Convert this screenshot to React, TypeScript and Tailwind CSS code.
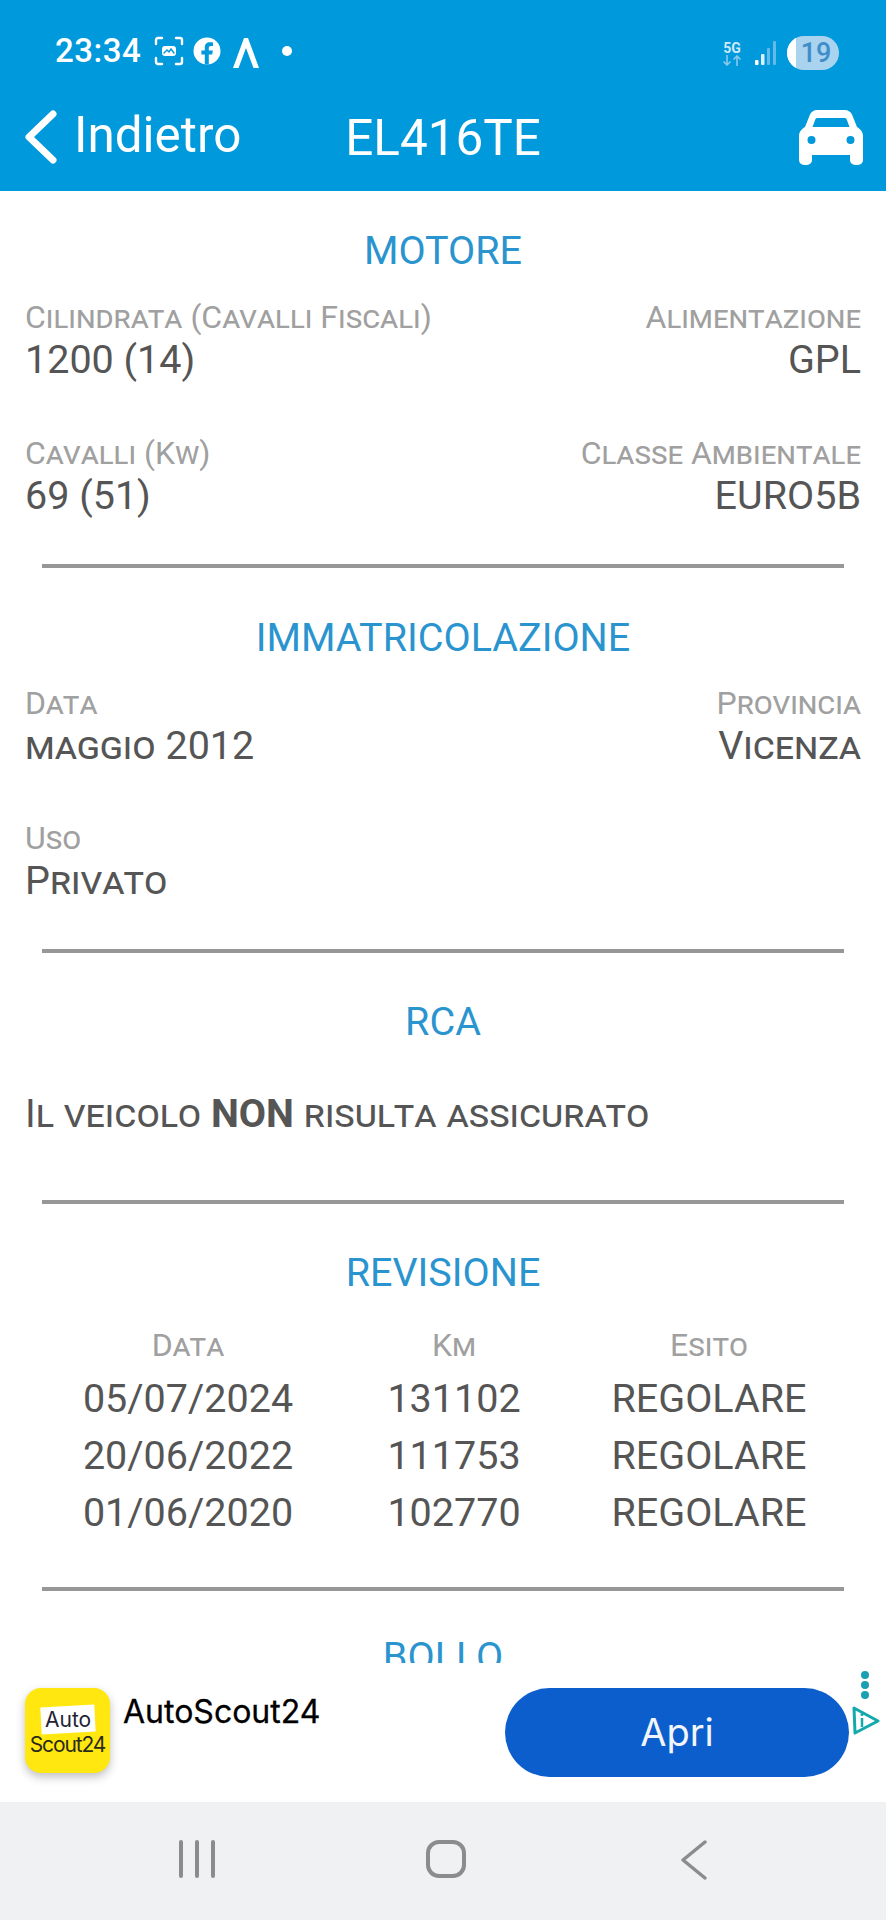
import { ReactNode } from "react";

const Label = ({ children }: { children: ReactNode }) => (
  <div className="text-[32px] leading-[38px] text-[#a0a0a0] [font-variant-caps:small-caps]">{children}</div>
);

const Value = ({ children, caps }: { children: ReactNode; caps?: boolean }) => (
  <div className={`text-[39.500px] leading-[48px] text-[#555555] ${caps ? "[font-variant-caps:small-caps]" : ""}`}>{children}</div>
);

const Field = ({ label, value, caps, right }: { label: string; value: string; caps?: boolean; right?: boolean }) => (
  <div className={right ? "text-right" : ""}>
    <Label>{label}</Label>
    <Value caps={caps}>{value}</Value>
  </div>
);

const Title = ({ children }: { children: ReactNode }) => (
  <h2 className="text-center text-[39.500px] leading-[46px] text-[#2a94cf]">{children}</h2>
);

const Divider = () => <div className="mx-[42px] h-[4px] bg-[#979797]" />;

const StatusBar = () => (
  <div className="flex h-[70px] items-end justify-between pl-[55px] pr-[47px] text-white">
    <div className="flex items-center">
      <span className="text-[33px] font-medium leading-[38px] tracking-[0.5px]">23:34</span>
      <svg className="ml-[13px]" width="30" height="30" viewBox="0 0 30 30" fill="none" stroke="white" strokeWidth="2.4" strokeLinecap="round">
        <path d="M2 8V4a2 2 0 0 1 2-2h4M22 2h4a2 2 0 0 1 2 2v4M28 22v4a2 2 0 0 1-2 2h-4M8 28H4a2 2 0 0 1-2-2v-4" />
        <rect x="8" y="10" width="14" height="10" rx="3" fill="white" stroke="none" />
        <path d="M10 17l3-3 2 2 2-3 3 4" stroke="#0099dc" strokeWidth="1.4" />
      </svg>
      <svg className="ml-[9px]" width="28" height="28" viewBox="0 0 28 28">
        <circle cx="14" cy="14" r="13.5" fill="white" />
        <path d="M15.8 27.5V17.5h3.4l.7-4h-4.1v-2.4c0-1.2.6-2.1 2.2-2.1h2V5.600c-.9-.2-2-.3-3-.3-3.2 0-5.2 1.900-5.200 5.200v3h-3.400v4h3.400v10z" fill="#0099dc" />
      </svg>
      <svg className="ml-[11px] mt-[4px]" width="28" height="32" viewBox="0 0 28 32">
        <path d="M12 1h4l11 30h-5.500L14 11 6.500 31H1z" fill="white" />
      </svg>
      <span className="ml-[22px] h-[10px] w-[10px] rounded-full bg-white" />
    </div>
    <div className="flex items-center">
      <div className="flex w-[22px] flex-col items-center">
        <span className="text-[14px] font-bold leading-[14px] text-[#cfe9f8]">5G</span>
        <svg width="20" height="11" viewBox="0 0 20 11" fill="none" stroke="#8cc9ee" strokeWidth="1.6">
          <path d="M5 0v10M1.500 6.500L5 10l3.500-3.500M15 11V1M11.500 4.500L15 1l3.500 3.500" />
        </svg>
      </div>
      <svg className="ml-[12px]" width="22" height="26" viewBox="0 0 22 26">
        <rect x="0" y="20" width="3.500" height="5" rx="1" fill="white" />
        <rect x="6" y="14" width="3.500" height="11" rx="1" fill="#d9effb" />
        <rect x="12" y="8" width="3" height="17" rx="1" fill="#66b9e8" />
        <rect x="18" y="1" width="3" height="24" rx="1" fill="#66b9e8" />
      </svg>
      <div className="relative ml-[10px] flex h-[34px] w-[52px] items-center justify-center overflow-hidden rounded-full bg-[#aad3ef] pl-[6px]">
        <span className="absolute inset-y-0 left-0 w-[9px] bg-white" />
        <span className="text-[27px] font-medium leading-none text-[#3f8ec9]">19</span>
      </div>
    </div>
  </div>
);

const TopBar = () => (
  <div className="relative flex h-[121px] items-center justify-center pt-[14px] text-white">
    <div className="absolute left-[25px] top-[40px] flex items-center">
      <svg width="32" height="54" viewBox="0 0 32 54" fill="none" stroke="white" strokeWidth="7" strokeLinecap="round" strokeLinejoin="round">
        <path d="M28 4L4 27l24 23" />
      </svg>
    </div>
    <span className="absolute left-[74px] top-[38px] text-[49.400px] leading-[54px]">Indietro</span>
    <span className="text-[49.400px] leading-[54px]">EL416TE</span>
    <svg className="absolute left-[799px] top-[40px]" width="64" height="55" viewBox="0 0 64 55">
      <path
        fillRule="evenodd"
        fill="white"
        d="M18 0h28c3 0 5.500 1.500 7 4.500L58 17c3.500 2 6 5 6 9v24a5 5 0 0 1-5 5h-3a5 5 0 0 1-5-5v-5H13v5a5 5 0 0 1-5 5H5a5 5 0 0 1-5-5V26c0-4 2.500-7 6-9l5-12.500C12.500 1.500 15 0 18 0zM18.500 8c-1 0-1.800.5-2.200 1.500L13.500 17h37l-2.800-7.500C47.300 8.500 46.500 8 45.500 8zM12.500 26a4 4 0 1 0 0 8 4 4 0 0 0 0-8zM51.500 26a4 4 0 1 0 0 8 4 4 0 0 0 0-8z"
      />
    </svg>
  </div>
);

const revisions = [
  ["05/07/2024", "131102", "REGOLARE"],
  ["20/06/2022", "111753", "REGOLARE"],
  ["01/06/2020", "102770", "REGOLARE"],
];

const AdBanner = () => (
  <div className="relative flex h-[139px] items-start bg-white pl-[25px] pr-[37px] pt-[25px]">
    <div className="relative flex h-[85px] w-[85px] flex-col items-center overflow-hidden rounded-[16px] bg-[#ffe70f] pt-[18px] shadow-[0_4px_10px_rgba(0,0,0,0.25)]">
      <div className="flex h-[27px] w-[54px] -rotate-3 items-center justify-center bg-white">
        <span className="rotate-3 font-['Inter'] text-[21px] leading-none text-[#222233]">Auto</span>
      </div>
      <span className="mt-[1px] font-['Inter'] text-[21px] leading-[22px] tracking-[-1.1px] text-[#2a2a1a]">Scout24</span>
    </div>
    <span className="ml-[13px] mt-[6px] font-['Inter'] text-[32px] leading-[36px] text-black [-webkit-text-stroke:0.3px_black]">AutoScout24</span>
    <button className="ml-auto flex h-[89px] w-[344px] items-center justify-center rounded-full bg-[#0b5ecb] font-['Inter'] text-[38px] text-[#f2f6fc]">
      Apri
    </button>
    <div className="absolute right-[17px] top-[8px] flex flex-col gap-[2px]">
      <span className="h-[8px] w-[8px] rounded-full bg-[#1a9fb3]" />
      <span className="h-[8px] w-[8px] rounded-full bg-[#1a9fb3]" />
      <span className="h-[8px] w-[8px] rounded-full bg-[#1a9fb3]" />
    </div>
    <svg className="absolute left-[851px] top-[43px]" width="29" height="30" viewBox="0 0 29 30" fill="none">
      <path d="M3 2L27 15 4 27z" stroke="#14a9ad" strokeWidth="3" strokeLinejoin="round" />
      <path d="M11 12v9" stroke="#14a9ad" strokeWidth="2.500" />
      <circle cx="11" cy="8.500" r="1.500" fill="#14a9ad" />
    </svg>
  </div>
);

const NavBar = () => (
  <div className="flex h-[118px] items-start bg-[#f0f1f3] pl-[179px] pt-[38px]">
    <div className="flex h-[38px] w-[42px] gap-[12px]">
      <span className="h-full w-[4px] rounded-sm bg-[#8c8c8c]" />
      <span className="h-full w-[4px] rounded-sm bg-[#8c8c8c]" />
      <span className="h-full w-[4px] rounded-sm bg-[#8c8c8c]" />
    </div>
    <div className="ml-[205px] h-[38px] w-[40px] rounded-[13px] border-[4px] border-[#8c8c8c]" />
    <svg className="ml-[215px]" width="26" height="40" viewBox="0 0 26 40" fill="none" stroke="#8c8c8c" strokeWidth="3.500" strokeLinecap="round" strokeLinejoin="round">
      <path d="M24 2L2 20l22 18" />
    </svg>
  </div>
);

export default function App() {
  return (
    <div className="flex h-[1920px] w-[886px] flex-col overflow-hidden bg-white font-['Roboto',sans-serif]">
      <header className="shrink-0 bg-[#0099dc]">
        <StatusBar />
        <TopBar />
      </header>

      <main className="min-h-0 flex-1 overflow-hidden pt-[37px]">
        <Title>MOTORE</Title>
        <div className="mt-[24px] flex justify-between px-[25px]">
          <Field label="Cilindrata (Cavalli Fiscali)" value="1200 (14)" />
          <Field label="Alimentazione" value="GPL" right />
        </div>
        <div className="mt-[50px] flex justify-between px-[25px]">
          <Field label="Cavalli (Kw)" value="69 (51)" />
          <Field label="Classe Ambientale" value="EURO5B" right />
        </div>
        <div className="mt-[44px]"><Divider /></div>

        <div className="mt-[47px]"><Title>IMMATRICOLAZIONE</Title></div>
        <div className="mt-[23px] flex justify-between px-[25px]">
          <Field label="Data" value="maggio 2012" caps />
          <Field label="Provincia" value="Vicenza" caps right />
        </div>
        <div className="mt-[49px] px-[25px]">
          <Field label="Uso" value="Privato" caps />
        </div>
        <div className="mt-[44px]"><Divider /></div>

        <div className="mt-[46px]"><Title>RCA</Title></div>
        <div className="mt-[46px] px-[25px] text-[39.500px] leading-[46px] text-[#555555] [font-variant-caps:small-caps]">
          Il veicolo <b className="font-bold">NON</b> risulta assicurato
        </div>
        <div className="mt-[63px]"><Divider /></div>

        <div className="mt-[46px]"><Title>REVISIONE</Title></div>
        <div className="mt-[30px] grid grid-cols-[326px_206px_304px] px-[25px] text-center">
          <Label>Data</Label>
          <Label>Km</Label>
          <Label>Esito</Label>
        </div>
        <div className="mt-[11px] px-[25px]">
          {revisions.map((row) => (
            <div key={row[0]} className="grid h-[57px] grid-cols-[326px_206px_304px] text-center">
              {row.map((cell) => (
                <Value key={cell}>{cell}</Value>
              ))}
            </div>
          ))}
        </div>
        <div className="mt-[41px]"><Divider /></div>

        <div className="mt-[43px]"><Title>BOLLO</Title></div>
      </main>

      <AdBanner />
      <NavBar />
    </div>
  );
}
